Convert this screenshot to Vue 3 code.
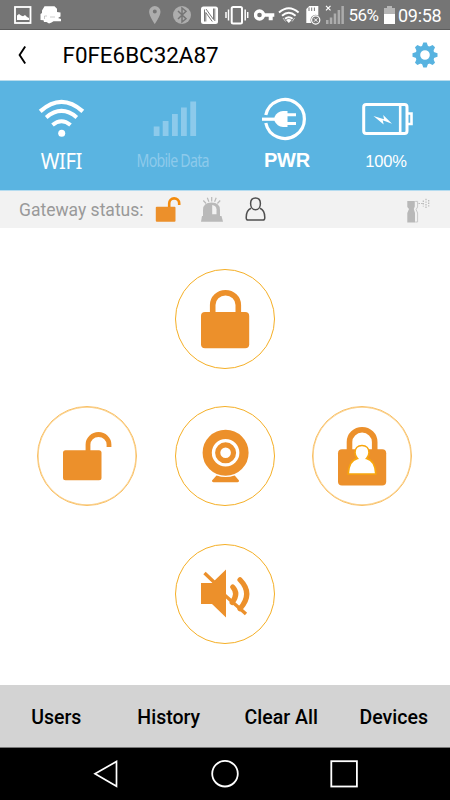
<script setup>
const tabs = ['Users', 'History', 'Clear All', 'Devices']
const teeth = [0, 45, 90, 135, 180, 225, 270, 315]
const bars = [
  { x: 152.7, y: 126.5 },
  { x: 161.7, y: 121 },
  { x: 171, y: 114 },
  { x: 180, y: 107.5 },
  { x: 189.3, y: 101.5 },
]
</script>

<template>
  <div class="screen">
    <header class="status">
      <svg class="pic" viewBox="14 0 18 30" width="18" height="30">
        <rect x="15" y="7" width="15.5" height="16" fill="none" stroke="#fff" stroke-width="1.8" />
        <path d="M17 20v-4.500l2-1.500 2 1.500 2 .7 2-1.200 2 2 2 1v2z" fill="#fff" />
      </svg>
      <svg class="droid" viewBox="40 0 22 30" width="22" height="30">
        <path d="M42 10.500l2.500-4.300h10l2.500 2.500v3.300l3.500.5v4l-2.500 1.500 3 1v2.300h-7.500l-2 1.200-2.500 1-2.500-1.500h-2.500l-.5-1.800-3-.2v-6l1.500-1z" fill="#fff" />
        <path d="M44.500 19v-3h2.500M50 17h5" stroke="#aaa" stroke-width=".6" fill="none" />
      </svg>
      <span class="spacer"></span>
      <svg class="pin" viewBox="149 0 12 30" width="12" height="30">
        <path d="M154.800 6a5.700 5.700 0 0 0-5.700 5.700c0 4.300 5.700 12.300 5.700 12.300s5.700-8 5.700-12.300a5.700 5.700 0 0 0-5.700-5.700zm0 3.600a2 2 0 1 1 0 4 2 2 0 0 1 0-4z" fill="#adadad" fill-rule="evenodd" />
      </svg>
      <svg class="bt" viewBox="173 0 18 30" width="18" height="30">
        <circle cx="182" cy="15" r="9" fill="#adadad" />
        <path d="M178 11l8 7.800-4 3.200V8l4 3.200-8 7.800" fill="none" stroke="#757575" stroke-width="1.500" />
      </svg>
      <svg class="nfc" viewBox="201 0 18 30" width="18" height="30">
        <rect x="201" y="6.500" width="17" height="17.500" rx="2.500" fill="#fff" />
        <path d="M204.500 21.500V9.500M206 9l7.500 10.500v-11M214.800 8.500v12.500M205.800 21.500v-9l6.500 9" fill="none" stroke="#777" stroke-width="1" />
      </svg>
      <svg class="vibe" viewBox="225.500 0 24 30" width="24" height="30">
        <rect x="232.200" y="7" width="10.300" height="16.500" rx="1.500" fill="none" stroke="#fff" stroke-width="2" />
        <path d="M229 9.500v11M226.500 12v6M245.700 9.500v11M248.200 12v6" stroke="#fff" stroke-width="1.500" />
      </svg>
      <svg class="key" viewBox="254 0 21 30" width="21" height="30">
        <circle cx="259.500" cy="15" r="4" fill="none" stroke="#fff" stroke-width="3.400" />
        <path d="M264 13.300h10.300v3.400h-1.600v3.500h-4v-3.500H264z" fill="#fff" />
      </svg>
      <svg class="wf" viewBox="278 0 22 30" width="22" height="30">
        <path d="M279 12.500q9.800-8.700 19.600 0M282 15.800q6.800-6 13.600 0M285 18.800q3.800-3.200 7.600 0" fill="none" stroke="#fff" stroke-width="1.900" />
        <path d="M286 20q2.800-2 5.600 0l-2.800 3z" fill="#fff" />
        <path d="M283 18l2.500 3.500M294.600 18l-2.500 3.500" stroke="#ddd" stroke-width=".8" />
      </svg>
      <svg class="sd" viewBox="306 0 15 30" width="15" height="30">
        <path d="M306.300 9l3-3h9v17h-12z" fill="#fff" />
        <path d="M309 7.500v3.500M311.700 7.500v3.500M314.400 7.500v3.500" stroke="#777" stroke-width="1" />
        <circle cx="315.700" cy="20" r="5.200" fill="#777" />
        <circle cx="315.700" cy="20" r="4.100" fill="none" stroke="#fff" stroke-width="1.200" />
        <path d="M314 18.300l3.400 3.400M317.400 18.300l-3.400 3.400" stroke="#fff" />
      </svg>
      <svg class="sig" viewBox="325 0 20 30" width="20" height="30">
        <path d="M326 5.800l4.500 4.500M330.500 5.800l-4.500 4.500" stroke="#fff" stroke-width="1.200" />
        <path d="M326 20h2.500v4H326zM329.800 17.500h2.500V24h-2.500zM333.700 13.500h2.500V24h-2.500zM337.600 10h2.500v14h-2.500zM341.400 6h2.500v18h-2.500z" fill="#acacac" />
      </svg>
      <span class="pct">56%</span>
      <svg class="bat" viewBox="384 0 12 30" width="12" height="30">
        <path d="M387 6h5v2h3v16h-11V8h3z" fill="#b5b5b5" />
        <path d="M384 14h11v10h-11z" fill="#fff" />
      </svg>
      <span class="time">09:58</span>
    </header>

    <div class="title">
      <svg class="back" viewBox="16 30 12 50" width="12" height="50">
        <path d="M25.200 46.500l-5.600 8.500 5.600 8.500" fill="none" stroke="#000" stroke-width="1.900" />
      </svg>
      <h1>F0FE6BC32A87</h1>
      <svg class="gear" viewBox="-13 -13 26 26" width="26" height="26">
        <g fill="#58b3e0">
          <path v-for="a in teeth" :key="a" d="M-3.300-8L-1.700-12.500h3.400L3.300-8z" :transform="`rotate(${a})`" />
        </g>
        <circle r="7.200" fill="none" stroke="#58b3e0" stroke-width="4.800" />
      </svg>
    </div>

    <section class="panel">
      <div class="tile">
        <svg viewBox="38 95 48 46" width="48" height="46">
          <g fill="none" stroke="#fff">
            <path d="M40.200 111.400Q61.500 92.400 82.800 111.400" stroke-width="4.200" />
            <path d="M46.200 117.400Q61.500 104.400 76.800 117.400" stroke-width="4" />
            <path d="M52.500 125Q61.500 117.500 70.500 125" stroke-width="4" />
          </g>
          <circle cx="61.700" cy="133.200" r="3.500" fill="#fff" />
        </svg>
        <span class="lab wifi">WIFI</span>
      </div>
      <div class="tile">
        <svg viewBox="148 95 48 46" width="48" height="46">
          <rect v-for="b in bars" :key="b.x" :x="b.x" :y="b.y" width="5.800" :height="136 - b.y" fill="#8dcaeb" />
        </svg>
        <span class="lab mobile">Mobile Data</span>
      </div>
      <div class="tile">
        <svg viewBox="262 95 50 46" width="50" height="46">
          <g fill="none" stroke="#fff">
            <path d="M265.800 115a19.500 19.500 0 1 1 0 8" stroke-width="3.200" />
            <path d="M262 119.200h15" stroke-width="3.200" />
            <path d="M286 114.800h10M286 123.500h10" stroke-width="2.900" />
          </g>
          <path d="M274.500 117q2.500-5.500 8.500-6h4.500v16H283q-6-.5-8.500-6z" fill="#fff" />
        </svg>
        <span class="lab pwr">PWR</span>
      </div>
      <div class="tile">
        <svg viewBox="359 95 54 46" width="54" height="46">
          <g fill="none" stroke="#fff" stroke-width="3">
            <rect x="363.700" y="104.500" width="43.300" height="29" rx="2.500" />
            <path d="M400.200 105v28" stroke-width="2.600" />
            <path d="M408 113.500h3.500v10.500H408" stroke-width="2.600" />
          </g>
          <path d="M373.500 116l10.500 3.300-.8-4.300 8.800 8.800-9.300-3.500 1 4.200z" fill="#fff" />
        </svg>
        <span class="lab full">100%</span>
      </div>
    </section>

    <section class="gateway">
      <span class="gtext">Gateway status:</span>
      <svg class="g1" viewBox="154 194 28 32" width="28" height="32">
        <rect x="155.800" y="206.700" width="19.700" height="15" rx="1" fill="#ec902b" />
        <path d="M169.200 207v-3.500a5 5 0 0 1 10-.2v1.700" fill="none" stroke="#f48b0b" stroke-width="2.600" />
      </svg>
      <svg class="g2" viewBox="200 194 24 32" width="24" height="32">
        <path d="M203 218v-8q0-7.500 8.500-7.500t8.500 7.500v8z" fill="#b9b9b9" />
        <path d="M202 216h19.500l1.500 5.700h-22z" fill="#b9b9b9" />
        <path d="M212.200 205v9.300h4.300v-5q-.5-4-4.300-4.300z" fill="#f2f2f2" />
        <path d="M211.700 197v4.500M207.300 197.800l1.600 4M216.200 197.800l-1.600 4M203.300 200.500l2.800 3M220.200 200.500l-2.800 3" stroke="#b9b9b9" stroke-width="1.200" />
      </svg>
      <svg class="g3" viewBox="244 194 24 32" width="24" height="32">
        <path d="M255.500 198c3.300 0 4.900 2.200 4.900 5.500s-1.800 6.300-4.900 6.300-4.900-3-4.900-6.300 1.600-5.500 4.900-5.500zM251 208.200c-3 1.300-4.800 4-4.800 9.200 0 2 .3 2.700 1.800 2.700h15c1.500 0 1.800-.7 1.800-2.700 0-5.200-1.800-7.900-4.800-9.200" fill="none" stroke="#505050" stroke-width="1.500" />
      </svg>
      <span class="spacer"></span>
      <svg class="g4" viewBox="405 194 26 32" width="26" height="32">
        <path d="M407.300 201h7.500v5.500l-1 2.500 1.200 4v9.500h-7.700V213l1.700-4-1.700-2z" fill="#b8b8b8" />
        <path d="M415.200 201.400h2.400v5.600l-1.500 2.500 1.500 3.500v9h-2.400" fill="none" stroke="#c8c8c8" />
        <path d="M418.500 203.500h4.500M423.300 200.500v6M426 198.800v10M428.700 200v7" stroke="#b8b8b8" stroke-width="1.200" stroke-dasharray="1.400 1.200" />
      </svg>
    </section>

    <main>
      <button class="round top">
        <svg viewBox="165 259 120 120" width="120" height="120">
          <rect x="201" y="312" width="48.200" height="36.200" rx="4" fill="#ec902b" />
          <path d="M212.700 313.500v-8.500a12.800 12.300 0 0 1 25.600 0v8.500" fill="none" stroke="#ec902b" stroke-width="5.600" />
        </svg>
      </button>
      <button class="round left pale">
        <svg viewBox="27.500 396.500 120 120" width="120" height="120">
          <rect x="63.500" y="450.800" width="38.500" height="30" rx="2.500" fill="#ec902b" />
          <path d="M88.500 452v-7a10.500 10 0 0 1 21 0v2.500" fill="none" stroke="#ec902b" stroke-width="4.800" />
        </svg>
      </button>
      <button class="round mid">
        <svg viewBox="165 396.500 120 120" width="120" height="120">
          <circle cx="225.600" cy="453.300" r="18.400" fill="none" stroke="#ec902b" stroke-width="9.200" />
          <circle cx="225.600" cy="453.300" r="7.900" fill="none" stroke="#ec902b" stroke-width="5.200" />
          <path d="M216.500 476q9.100 3 18.200 0l4.300 5q.3 1.700-1.500 1.700h-24q-1.800 0-1.500-1.700z" fill="#ec902b" />
        </svg>
      </button>
      <button class="round right pale">
        <svg viewBox="302.500 396.500 120 120" width="120" height="120">
          <rect x="338.500" y="449.800" width="48.200" height="36.200" rx="4" fill="#ec902b" />
          <path d="M350 451.500v-9a12.600 12.200 0 0 1 25.200 0v9" fill="none" stroke="#ec902b" stroke-width="5.600" />
          <path d="M362.500 446c4.500 0 7 3.200 7 7 0 3-1 4.500-2.500 6 5 1.200 8.800 5.200 9.300 15.500h-27.600c.5-10.300 4.300-14.300 9.300-15.500-1.500-1.500-2.500-3-2.500-6 0-3.800 2.500-7 7-7z" fill="#fff" stroke="#f8a70d" stroke-width="1.600" />
        </svg>
      </button>
      <button class="round bottom">
        <svg viewBox="165 534.500 120 120" width="120" height="120">
          <path d="M201 583.500h11l14-13.500v48l-14-13.500h-11z" fill="#ec902b" />
          <g fill="none" stroke="#ec902b">
            <path d="M204.500 573.500l10.500 10M224 595l22 19.500" stroke-width="3.400" />
            <path d="M232.700 587.500q6.300 6.500-.5 15.500" stroke-width="5.200" stroke-linecap="round" />
            <path d="M240 580.300q13.500 14 0 29" stroke-width="5.200" stroke-linecap="round" />
          </g>
        </svg>
      </button>
    </main>

    <nav class="tabs">
      <a v-for="t in tabs" :key="t">{{ t }}</a>
    </nav>
    <footer>
      <svg viewBox="93 748 28 52" width="28" height="52"><path d="M117.500 761.500v24.700l-21.500-12.400z" fill="none" stroke="#fff" stroke-width="1.700" /></svg>
      <svg viewBox="210 748 30 52" width="30" height="52"><circle cx="225" cy="773.700" r="12.800" fill="none" stroke="#fff" stroke-width="1.800" /></svg>
      <svg viewBox="329 748 30 52" width="30" height="52"><rect x="331.300" y="761.200" width="25.600" height="25.300" fill="none" stroke="#fff" stroke-width="1.800" /></svg>
    </footer>
  </div>
</template>

<style>
body { margin: 0; background: #fff; }
</style>

<style scoped>
.screen { width: 450px; height: 800px; display: flex; flex-direction: column; overflow: hidden; background: #fff; font-family: Roboto, sans-serif; }
svg { display: block; flex: none; }
.spacer { flex: 1; }
.status { height: 30px; box-sizing: border-box; background: #757575; border-bottom: 1px solid #5c5c5c; display: flex; padding: 0 9px 0 14px; color: #fff; }
.droid { margin-left: 8px; }
.bt { margin-left: 12px; }
.nfc { margin-left: 10px; }
.vibe { margin-left: 6.5px; }
.key { margin-left: 4.5px; }
.wf { margin-left: 3px; }
.sd { margin-left: 6px; }
.sig { margin-left: 4px; }
.pct { width: 35px; margin-left: 4px; font-size: 17px; line-height: 31px; letter-spacing: -.5px; }
.time { width: 43px; margin-left: 2.5px; font-size: 18px; line-height: 31px; letter-spacing: -.3px; white-space: nowrap; }
.title { height: 51px; box-sizing: border-box; border-bottom: 1px solid #b9dded; display: flex; align-items: center; padding: 0 12px 0 16px; }
.title h1 { flex: 1; margin: 0 0 0 34.5px; font-size: 22.4px; font-weight: 400; line-height: 30px; color: #000; }
.panel { height: 109px; background: #5ab4e1; border-bottom: 1px solid #b5dcf0; display: grid; grid-template-columns: 123px 99px 130px 68px; color: #fff; }
.tile { display: flex; flex-direction: column; align-items: center; padding-top: 14px; }
.lab { line-height: 24px; margin-top: 8px; white-space: nowrap; }
.wifi { font-family: "Noto Sans", sans-serif; font-size: 21px; letter-spacing: -.5px; transform: scaleX(.96); }
.mobile { font-family: "Noto Sans", sans-serif; font-size: 18px; letter-spacing: -1px; margin-top: 7px; color: #8dcaeb; transform: scaleX(.79); }
.pwr { font-family: "Liberation Sans", sans-serif; font-size: 20px; font-weight: 700; margin-top: 7px; letter-spacing: -.2px; }
.full { font-family: "Liberation Sans", sans-serif; font-size: 16.5px; letter-spacing: -.2px; }
.gateway { height: 37px; background: #f2f2f2; display: flex; align-items: center; padding: 0 19px; }
.gtext { width: 135px; font-size: 17.5px; color: #999; white-space: nowrap; }
.g2 { margin-left: 18px; }
.g3 { margin-left: 20px; }
main { height: 457px; box-sizing: border-box; padding: 41px 37px 0; display: grid; grid-template-columns: repeat(3, 100px); grid-template-rows: repeat(3, 100px); column-gap: 37.5px; row-gap: 37.4px; }
.round { width: 100px; height: 100px; box-sizing: border-box; border: 1px solid #f5af26; border-radius: 50%; background: #fff; padding: 0; display: flex; align-items: center; justify-content: center; }
.pale { border: 1px solid #f9bf63; box-shadow: inset 0 0 0 .7px #fbd089; }
.top { grid-area: 1 / 2; }
.left { grid-area: 2 / 1; }
.mid { grid-area: 2 / 2; }
.right { grid-area: 2 / 3; }
.bottom { grid-area: 3 / 2; }
.tabs { height: 63px; box-sizing: border-box; background: #d3d3d3; border-bottom: 1px solid #777; display: grid; grid-template-columns: repeat(4, 1fr); align-items: center; padding-top: 2px; }
.tabs a { text-align: center; font-size: 19.5px; font-weight: 500; color: #000; white-space: nowrap; }
footer { height: 52px; background: #000; display: flex; justify-content: space-between; padding: 0 91px 0 92px; }
</style>
